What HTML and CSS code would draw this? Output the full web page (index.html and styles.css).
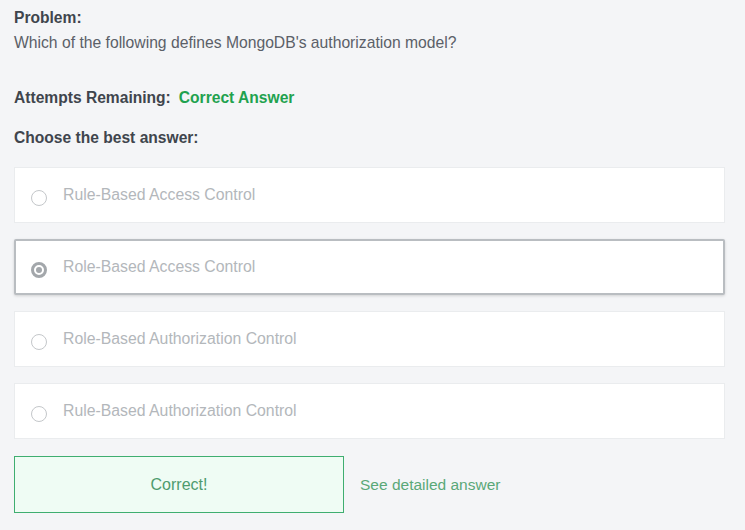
FILE: index.html
```html
<!DOCTYPE html>
<html>
<head>
<meta charset="utf-8">
<link rel="stylesheet" href="styles.css">
</head>
<body>
<div class="page">
  <div class="problem">
    <div class="label">Problem:</div>
    <div class="question">Which of the following defines MongoDB's authorization model?</div>
  </div>
  <div class="attempts"><span class="label">Attempts Remaining:</span><span class="correct-answer">Correct Answer</span></div>
  <div class="choose label">Choose the best answer:</div>
  <div class="options">
    <div class="option"><span class="radio"></span><span class="opt-text">Rule-Based Access Control</span></div>
    <div class="option selected"><span class="radio checked"></span><span class="opt-text">Role-Based Access Control</span></div>
    <div class="option"><span class="radio"></span><span class="opt-text">Role-Based Authorization Control</span></div>
    <div class="option"><span class="radio"></span><span class="opt-text">Rule-Based Authorization Control</span></div>
  </div>
  <div class="actions">
    <div class="result">Correct!</div>
    <a class="detail">See detailed answer</a>
  </div>
</div>
</body>
</html>
```
FILE: styles.css
```css
html, body {
  margin: 0;
  padding: 0;
  background: #f4f5f7;
}
body {
  font-family: "Liberation Sans", Arial, sans-serif;
  color: #5b6068;
  font-size: 15.7px;
}
.page {
  padding: 8px 20px 0 14px;
}
.label {
  font-weight: bold;
  color: #3f454d;
  font-size: 15.6px;
}
.problem .label {
  line-height: 20px;
}
.question {
  margin-top: 5px;
  line-height: 20px;
  font-size: 15.7px;
}
.attempts {
  margin-top: 35px;
  line-height: 20px;
  display: flex;
  gap: 8px;
}
.correct-answer {
  color: #1fa24f;
  font-weight: bold;
  font-size: 15.6px;
}
.choose {
  margin-top: 20px;
  line-height: 20px;
}
.options {
  margin-top: 19px;
  display: flex;
  flex-direction: column;
  gap: 16px;
}
.option {
  height: 56px;
  box-sizing: border-box;
  background: #fff;
  border: 1px solid #eaecee;
  display: flex;
  align-items: center;
  padding-left: 16px;
}
.option.selected {
  border: 2px solid #b9bdc1;
  border-radius: 2px;
  box-shadow: 0 1px 3px rgba(0,0,0,0.15);
  padding-left: 15px;
}
.radio {
  width: 16px;
  height: 16px;
  box-sizing: border-box;
  border: 1px solid #c4c7ca;
  border-radius: 50%;
  margin-top: 6px;
  position: relative;
  flex: none;
}
.radio.checked {
  border: 3px solid #a3a7ab;
}
.radio.checked::after {
  content: "";
  position: absolute;
  left: 2px;
  top: 2px;
  width: 6px;
  height: 6px;
  border-radius: 50%;
  background: #a3a7ab;
}
.opt-text {
  margin-left: 16px;
  color: #b3b7bb;
  font-size: 15.8px;
}
.actions {
  margin-top: 17px;
  display: flex;
  align-items: center;
}
.result {
  width: 330px;
  height: 57px;
  box-sizing: border-box;
  border: 1px solid #3fae70;
  background: #effcf4;
  color: #4e9b6e;
  display: flex;
  align-items: center;
  justify-content: center;
  font-size: 16px;
}
.detail {
  margin-left: 16px;
  color: #5aa878;
  font-size: 15.5px;
}
```
